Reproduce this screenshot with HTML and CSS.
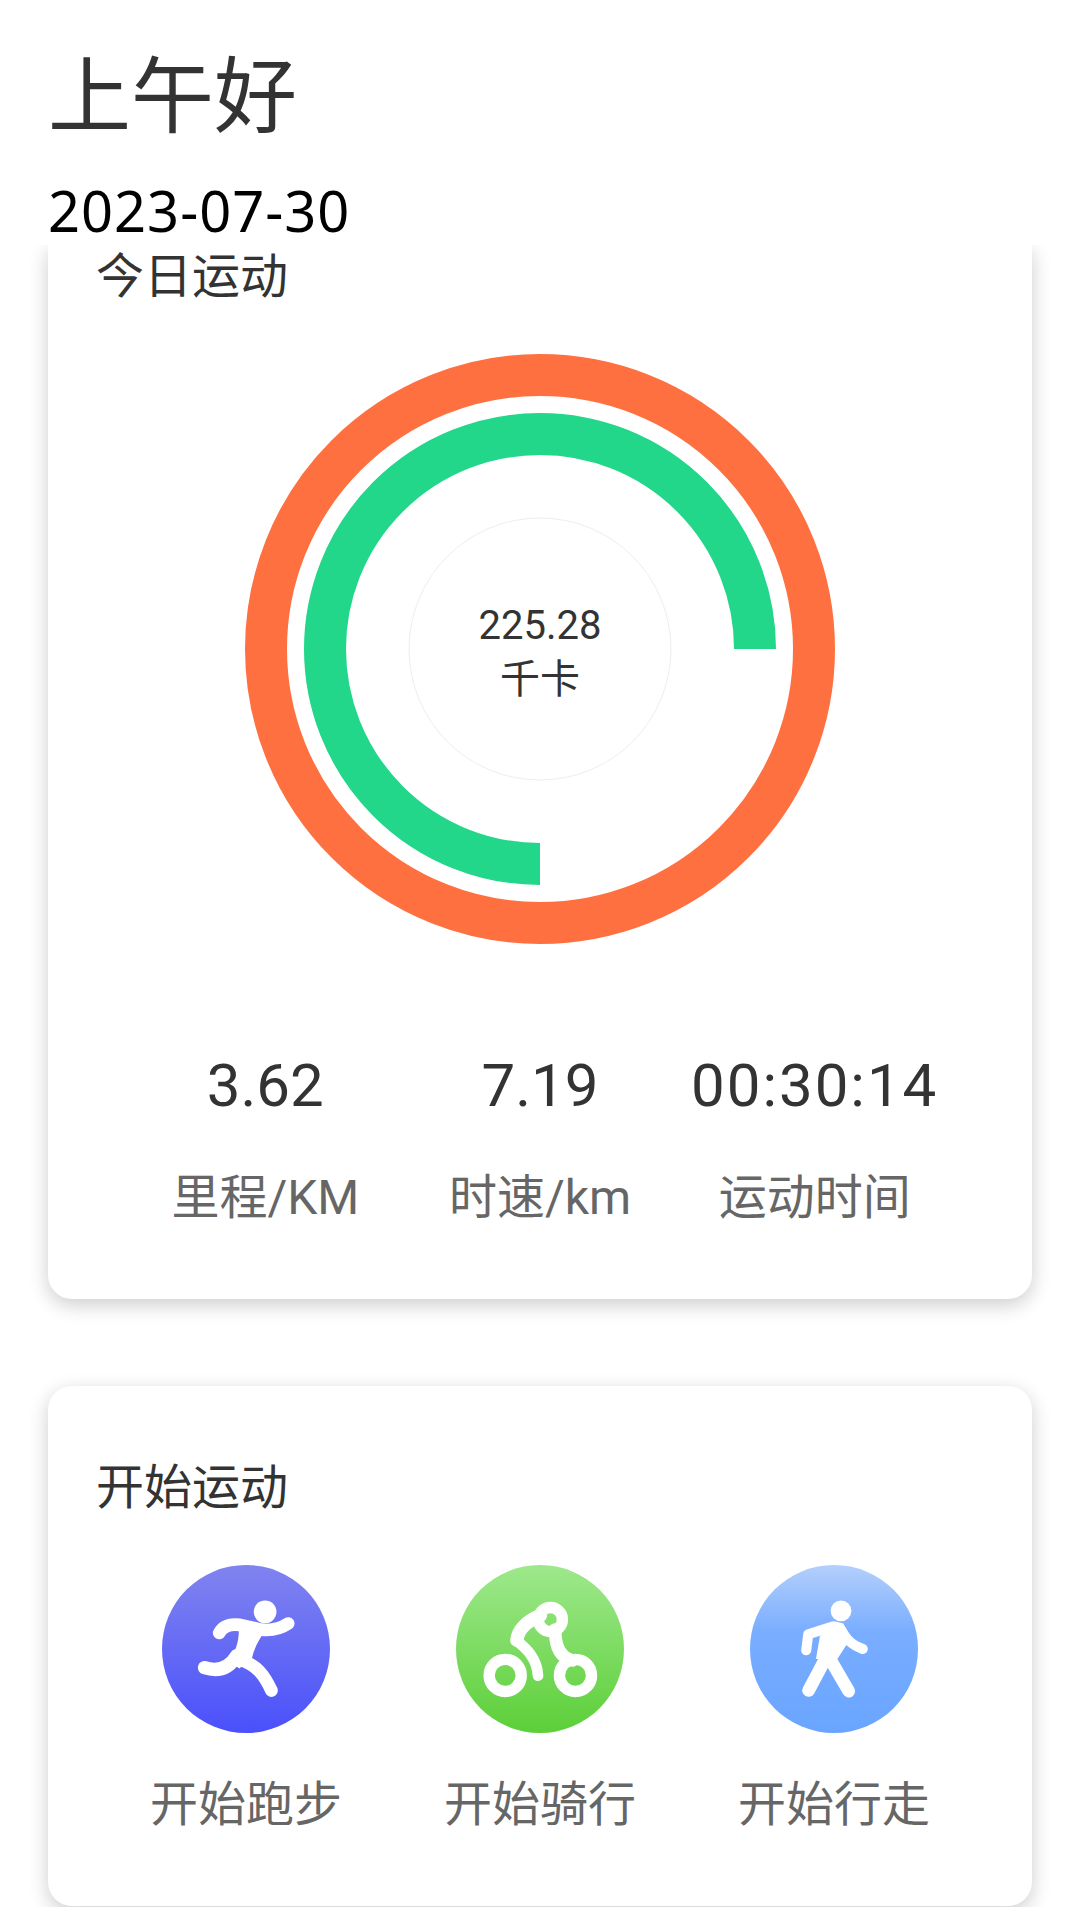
FILE: index.html
```html
<!DOCTYPE html>
<html lang="zh">
<head>
<meta charset="utf-8">
<title>今日运动</title>
<link rel="stylesheet" href="styles.css">
</head>
<body>
<div class="page">
  <header class="top">
    <div class="greet">上午好</div>
    <div class="date">2023-07-30</div>
  </header>
  <main class="scroll">
    <section class="card today">
      <h2 class="heading">今日运动</h2>
      <div class="rings">
        <svg class="ring-svg" viewBox="0 0 590 590">
          <circle cx="295" cy="295" r="274" fill="none" stroke="#ff7040" stroke-width="42"/>
          <path d="M510 295A215 215 0 1 0 295 510" fill="none" stroke="#22d68a" stroke-width="42"/>
          <circle cx="295" cy="295" r="131" fill="#fff" stroke="#eeeeee" stroke-width="1"/>
        </svg>
        <div class="ring-text">
          <div>225.28</div>
          <div>千卡</div>
        </div>
      </div>
      <div class="stats">
        <div class="stat"><div class="stat-value">3.62</div><div class="stat-label">里程/KM</div></div>
        <div class="stat"><div class="stat-value">7.19</div><div class="stat-label">时速/km</div></div>
        <div class="stat"><div class="stat-value stat-time">00:30:14</div><div class="stat-label">运动时间</div></div>
      </div>
    </section>
    <section class="card start">
      <h2 class="heading">开始运动</h2>
      <div class="actions">
        <div class="action">
          <svg class="action-icon" viewBox="67 75 502 502">
            <defs><linearGradient id="g-run" x1="0" y1="0" x2="0" y2="1"><stop offset="0" stop-color="#8084ef"/><stop offset="1" stop-color="#4a50fb"/></linearGradient></defs>
            <circle cx="318" cy="326" r="251" fill="url(#g-run)"/>
            <circle cx="375" cy="215" r="34" fill="#fff"/>
            <path class="limb" stroke-width="38" d="M238 278C250 256 272 250 300 254L362 268C392 272 420 266 444 250"/>
            <path fill="#fff" d="M296 254L378 268C356 298 342 326 336 352L298 384L266 360C286 338 300 300 296 254Z"/>
            <path class="limb" stroke-width="40" d="M194 382C232 394 266 386 290 346"/>
            <path class="limb" stroke-width="38" d="M300 358C350 374 372 402 394 450"/>
          </svg>
          <div class="action-label">开始跑步</div>
        </div>
        <div class="action">
          <svg class="action-icon" viewBox="48 75 502 502">
            <defs><linearGradient id="g-bike" x1="0" y1="0" x2="0" y2="1"><stop offset="0" stop-color="#9ee88c"/><stop offset="1" stop-color="#5ccf38"/></linearGradient></defs>
            <circle cx="299" cy="326" r="251" fill="url(#g-bike)"/>
            <circle class="limb" stroke-width="34" cx="195" cy="405" r="48"/>
            <circle class="limb" stroke-width="34" cx="405" cy="405" r="48"/>
            <circle class="limb" stroke-width="34" cx="330" cy="238" r="36"/>
            <path class="limb" stroke-width="40" d="M230 300C232 268 262 242 300 226"/>
            <path class="limb" stroke-width="32" d="M230 302C256 322 290 352 293 406"/>
            <path class="limb" stroke-width="38" d="M344 268C344 304 350 350 396 360"/>
          </svg>
          <div class="action-label">开始骑行</div>
        </div>
        <div class="action">
          <svg class="action-icon" viewBox="45 75 502 502">
            <defs><linearGradient id="g-walk" x1="0" y1="0" x2="0" y2="1"><stop offset="0" stop-color="#b4cffc"/><stop offset=".4" stop-color="#79adff"/><stop offset="1" stop-color="#69a5ff"/></linearGradient></defs>
            <circle cx="296" cy="326" r="251" fill="url(#g-walk)"/>
            <circle cx="317" cy="212" r="31" fill="#fff"/>
            <path class="limb" stroke-width="30" d="M213 330L219 282L294 258"/>
            <path class="limb" stroke-width="30" d="M318 270C334 298 346 312 382 326"/>
            <path fill="#fff" d="M254 288L300 244L324 250L346 294L306 356L242 356Z"/>
            <path class="limb" stroke-width="38" d="M220 450L270 356"/>
            <path class="limb" stroke-width="38" d="M340 452L284 356"/>
          </svg>
          <div class="action-label">开始行走</div>
        </div>
      </div>
    </section>
  </main>
</div>
</body>
</html>
```
FILE: styles.css
```css
* { box-sizing: border-box; }
html, body { margin: 0; padding: 0; background: #fff; }
body { font-family: Roboto, "Noto Sans CJK SC", sans-serif; }
.page { width: 1080px; height: 1907px; overflow: hidden; display: flex; flex-direction: column; }
.top { height: 245px; padding: 52px 0 0 48px; flex: none; }
.greet { font-size: 83px; line-height: 92px; color: #333; }
.date { font-family: "Noto Sans", sans-serif; font-size: 56px; line-height: 64px; letter-spacing: 1px; color: #000; margin-top: 34px; }
.scroll { flex: 1; min-height: 0; overflow: hidden; padding: 0 48px; }
.card { background: #fff; box-shadow: 0 6px 20px rgba(0,0,0,.2); }
.today { height: 1054px; border-radius: 0 0 24px 24px; display: flex; flex-direction: column; align-items: center; }
.start { margin-top: 87px; height: 520px; border-radius: 24px; padding-top: 70px; }
.heading { margin: 0; width: 100%; padding-left: 48px; font-size: 48px; line-height: 64px; font-weight: 400; color: #333; }
.rings { position: relative; width: 590px; height: 590px; margin-top: 45px; }
.ring-svg { display: block; width: 590px; height: 590px; }
.ring-text { position: absolute; inset: 0; padding-top: 8px; display: flex; flex-direction: column; align-items: center; justify-content: center; font-size: 40px; line-height: 54px; color: #333; }
.stats { width: 100%; padding: 0 80px; margin-top: 102px; display: grid; grid-template-columns: repeat(3, 1fr); }
.stat { text-align: center; }
.stat-value { font-size: 60px; line-height: 80px; color: #333; }
.stat-time { letter-spacing: 2px; }
.stat-label { font-size: 48px; line-height: 64px; color: #666; margin-top: 40px; }
.actions { display: grid; grid-template-columns: repeat(3, 1fr); padding: 0 51px; margin-top: 45px; }
.action { display: flex; flex-direction: column; align-items: center; }
.action-icon { width: 168px; height: 168px; display: block; }
.action-label { font-size: 48px; line-height: 64px; color: #666; margin-top: 40px; white-space: nowrap; }
.limb { fill: none; stroke: #fff; stroke-linecap: round; stroke-linejoin: round; }
```
